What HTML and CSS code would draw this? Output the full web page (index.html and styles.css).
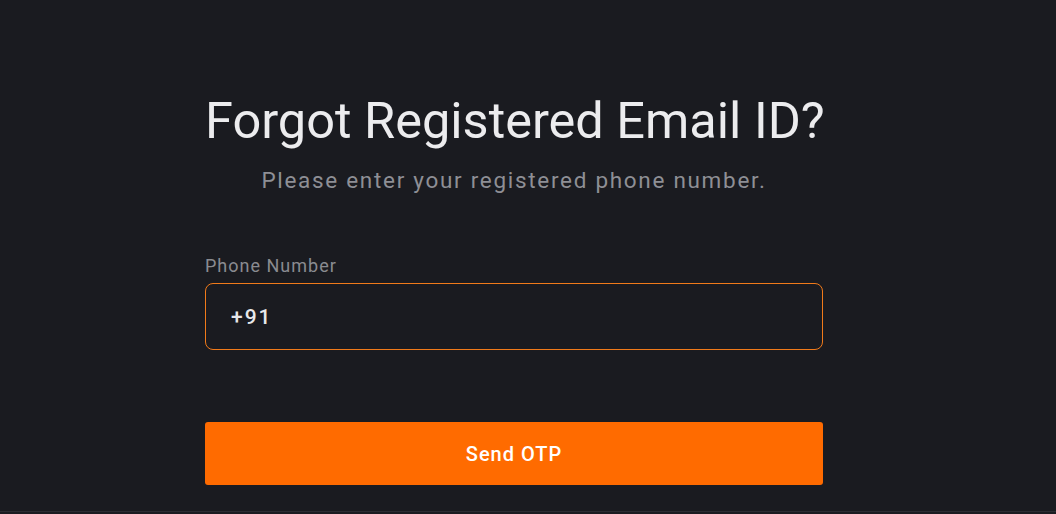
FILE: index.html
```html
<!DOCTYPE html>
<html>
<head>
<meta charset="utf-8">
<link rel="stylesheet" href="styles.css">
</head>
<body>
<main class="page">
  <section class="card">
    <h1 class="title">Forgot Registered Email ID?</h1>
    <p class="subtitle">Please enter your registered phone number.</p>
    <label class="label" for="phone">Phone Number</label>
    <div class="input-box">
      <input id="phone" class="input" type="text" value="+91">
    </div>
    <button class="btn">Send OTP</button>
  </section>
</main>
<div class="footer-line"></div>
</body>
</html>
```
FILE: styles.css
```css
* { box-sizing: border-box; }
html, body { margin: 0; padding: 0; }
body {
  background: #1a1b20;
  font-family: Roboto, "Noto Sans", sans-serif;
  height: 514px;
  overflow: hidden;
  display: flex;
  flex-direction: column;
}
.page {
  flex: 1;
  display: flex;
}
.card {
  width: 618px;
  margin-left: 205px;
  padding-top: 91px;
  display: flex;
  flex-direction: column;
}
.title {
  margin: 0;
  font-size: 50.5px;
  font-weight: 400;
  color: #ececee;
  text-align: center;
  line-height: 60px;
  white-space: nowrap;
}
.subtitle {
  margin: 15px 0 0;
  font-size: 22.5px;
  letter-spacing: 1.7px;
  color: #8e8f95;
  text-align: center;
  line-height: 28px;
}
.label {
  margin-top: 61px;
  font-size: 18px;
  letter-spacing: 1px;
  color: #8a8b90;
  line-height: 22px;
}
.input-box {
  margin-top: 6px;
  height: 67px;
  border: 1px solid #f07a1a;
  border-radius: 8px;
  display: flex;
  align-items: center;
  padding-left: 25px;
}
.input {
  background: transparent;
  border: 0;
  outline: none;
  font-family: Roboto, "Noto Sans", sans-serif;
  font-size: 21px;
  font-weight: 500;
  letter-spacing: 2px;
  color: #e8e8ea;
  width: 100%;
  padding: 0;
}
.btn {
  margin-top: 72px;
  height: 63px;
  border: 0;
  border-radius: 3px;
  background: #ff6b00;
  color: #ffffff;
  font-family: Roboto, "Noto Sans", sans-serif;
  font-size: 20px;
  font-weight: 500;
  letter-spacing: 1px;
}
.footer-line {
  height: 3px;
  background: #1b1c21;
  border-top: 1px solid #2c2d33;
}
```
